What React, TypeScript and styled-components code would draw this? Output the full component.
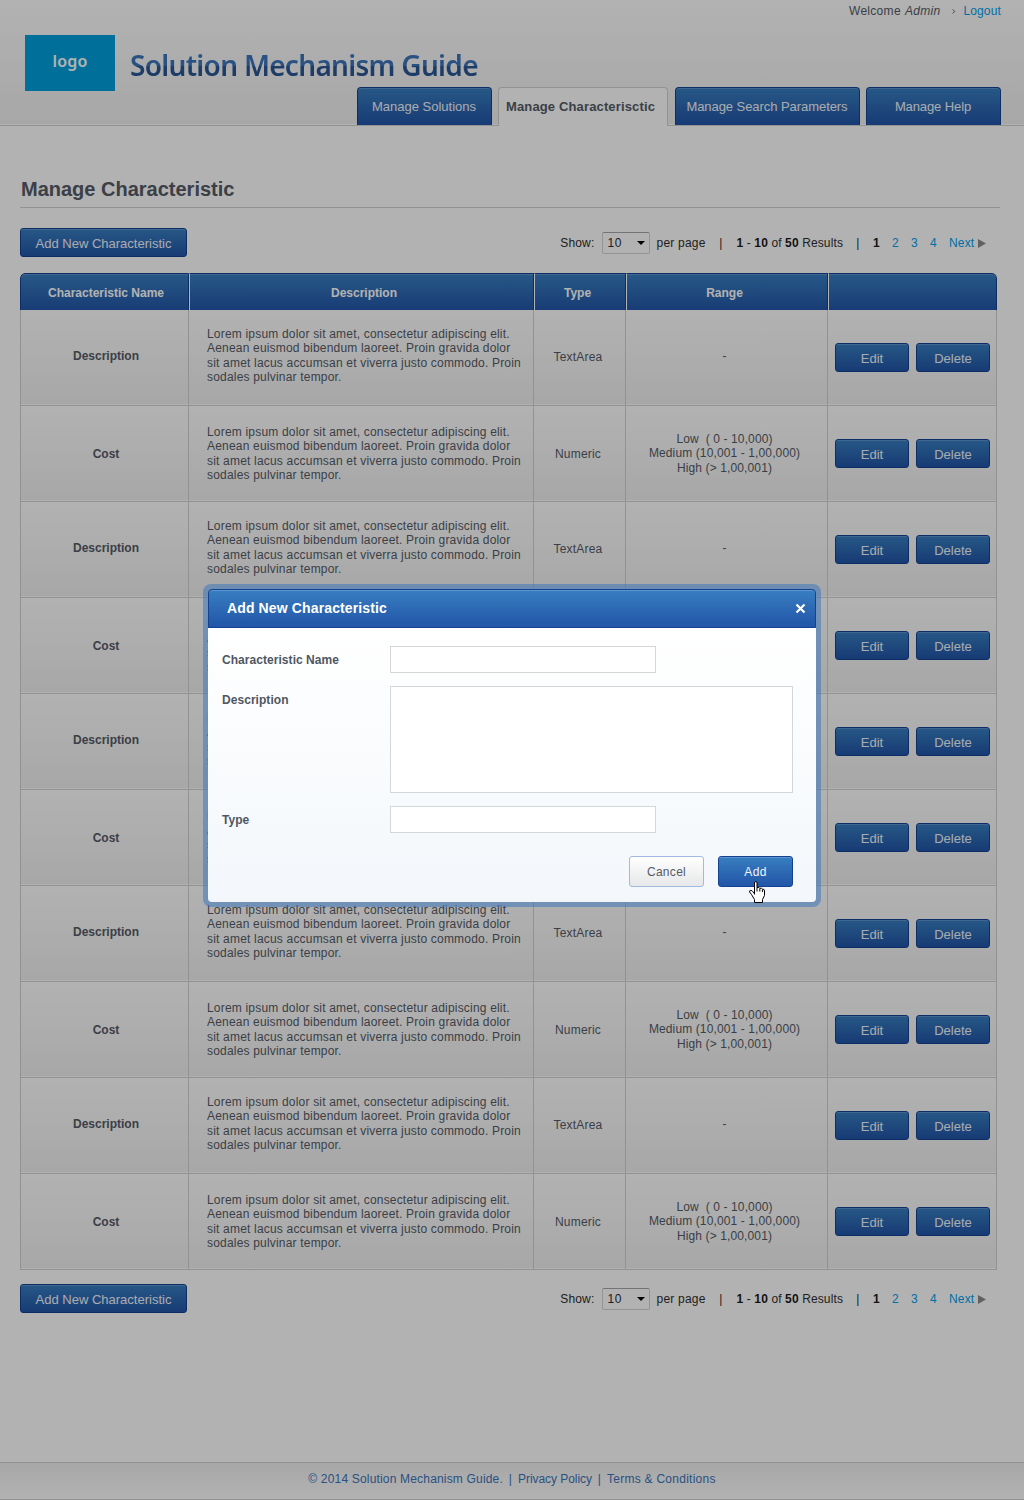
import React from "react";
import styled, { createGlobalStyle, css } from "styled-components";

const GlobalStyle = createGlobalStyle`
  *, *::before, *::after { box-sizing: border-box; }
  body {
    margin: 0;
    background: #fff;
    font-family: "Liberation Sans", Arial, sans-serif;
    font-size: 12px;
    color: #555b66;
  }
  a { text-decoration: none; color: inherit; }
  h1, h2, p { margin: 0; }
`;

const blueFill = css`
  background: linear-gradient(#387ec0, #2255a8);
  border: 1px solid #134291;
  box-shadow: inset 0 1px 0 #5b94cf;
`;

const Page = styled.div`
  position: relative;
  display: flex;
  flex-direction: column;
  width: 1024px;
  height: 1500px;
  overflow: hidden;
`;

const Header = styled.header`
  display: flex;
  justify-content: space-between;
  height: 126px;
  padding: 0 23px 0 25px;
  border-bottom: 1px solid #d2d2d2;
  background: linear-gradient(#fff, #f0f0f0);
  box-shadow: inset 0 -1px 0 #fff;
`;

const Brand = styled.div`
  display: flex;
  height: 56px;
  margin-top: 35px;
`;

const Logo = styled.div`
  width: 90px;
  height: 56px;
  background: #009fdb;
  color: #fff;
  font: 600 16px/52px "Noto Sans", sans-serif;
  letter-spacing: 0.2px;
  text-align: center;
`;

const BrandName = styled.h1`
  margin: 10px 0 0 15px;
  height: 41px;
  font: 600 28px/41px "Noto Sans", sans-serif;
  letter-spacing: -0.7px;
  white-space: nowrap;
  background: linear-gradient(#3b74bb 0, #3b74bb 21px, #2a5794 21px, #2a5794 100%);
  background-clip: text;
  color: transparent;
`;

const HeaderSide = styled.div`
  display: flex;
  flex-direction: column;
  justify-content: space-between;
  align-items: flex-end;
  width: 644px;
  margin-left: -300px;
`;

const UserBar = styled.div`
  display: flex;
  align-items: center;
  height: 22px;
  line-height: 22px;
  letter-spacing: 0.3px;
  em { margin-left: 4px; }
  svg { margin: 0 7px 0 12px; }
`;

const Link = styled.a`
  color: #00a0ee;
  letter-spacing: 0.15px;
`;

const Tabs = styled.nav`
  display: flex;
  width: 644px;
  height: 38px;
`;

const Tab = styled.a<{ $w: number; $gap: number; $active?: boolean; $ls?: number }>`
  width: ${(p) => p.$w}px;
  margin-right: ${(p) => p.$gap}px;
  border-radius: 4px 4px 0 0;
  font-size: 13px;
  line-height: 37px;
  letter-spacing: ${(p) => p.$ls ?? 0}px;
  text-align: center;
  white-space: nowrap;
  ${(p) =>
    p.$active
      ? css`
          height: 39px;
          border: 1px solid #d2d2d2;
          border-bottom: 0;
          background: #fff;
          font-weight: bold;
          padding-right: 5px;
        `
      : css`
          height: 38px;
          padding-right: 1px;
          color: #f2f5fa;
          ${blueFill}
          border-bottom: 0;
        `}
`;

const Main = styled.main`
  flex: 1;
  padding: 51px 24px 0 20px;
`;

const Title = styled.h2`
  height: 31px;
  padding-left: 1px;
  border-bottom: 1px solid #d2d2d2;
  font-size: 20px;
  line-height: 24px;
`;

const Toolbar = styled.div`
  display: flex;
  justify-content: space-between;
  align-items: flex-start;
  height: 30px;
`;

const Button = styled.button<{ $w: number; $h?: number; $size?: number; $ls?: number }>`
  ${blueFill}
  width: ${(p) => p.$w}px;
  height: ${(p) => p.$h ?? 29}px;
  padding: ${(p) => (p.$h ? 0 : 1)}px 0 0;
  border-radius: 3px;
  color: #f2f5fa;
  font-family: inherit;
  font-size: ${(p) => p.$size ?? 13}px;
  letter-spacing: ${(p) => p.$ls ?? 0}px;
`;

const CancelButton = styled(Button)`
  border-color: #9fbce0;
  background: linear-gradient(#fff, #e6e7e8);
  box-shadow: none;
  color: #555b66;
`;

const Pager = styled.div`
  display: flex;
  align-items: center;
  height: 30px;
  padding-right: 14px;
  color: #2e2e2e;
  letter-spacing: 0.2px;
  white-space: nowrap;
  b { color: #1c1c1c; }
`;

const PageSize = styled.div`
  display: flex;
  align-items: center;
  justify-content: space-between;
  width: 48px;
  height: 22px;
  margin: 0 7px;
  padding: 0 4px 0 5px;
  border: 1px solid #d4d4d8;
  border-top-color: #a6a6a6;
  border-radius: 2px;
  letter-spacing: 0.6px;
`;

const Bar = styled.span<{ $w: number }>`
  width: ${(p) => p.$w}px;
  text-align: center;
`;

const Results = styled.span`
  letter-spacing: 0.12px;
`;

const PageLinks = styled.div`
  display: flex;
  align-items: center;
  b, a { width: 19px; }
  a:last-of-type { width: 29px; }
`;

const GridTable = styled.div`
  width: 977px;
`;

const HeadRow = styled.div`
  display: grid;
  grid-template-columns: 169px 345px 92px 202px 169px;
  height: 37px;
  border-radius: 5px 5px 0 0;
  overflow: hidden;
`;

const HeadCell = styled.div`
  ${blueFill}
  color: #fff;
  font-weight: bold;
  line-height: 38px;
  text-align: center;
  &:first-child { border-radius: 5px 0 0 0; padding-left: 3px; }
  &:last-child { border-radius: 0 5px 0 0; }
  & + & {
    border-left-color: #fff;
    padding-left: 5px;
  }
  &:nth-child(n + 3) { padding-left: 0; padding-right: 5px; }
`;

const Row = styled.div`
  display: grid;
  grid-template-columns: 168px 345px 92px 202px 169px;
  height: 96px;
  border-bottom: 1px solid #d2d2d2;
  border-left: 1px solid #d2d2d2;
  background: linear-gradient(#fff, #f0f0f0);
  box-shadow: inset 0 -1px 0 #fff;
`;

const Cell = styled.div<{ $shift?: number }>`
  display: flex;
  flex-direction: column;
  align-items: center;
  justify-content: center;
  border-right: 1px solid #d2d2d2;
  padding-top: ${(p) => Math.max(p.$shift ?? 0, 0)}px;
  padding-bottom: ${(p) => Math.max(-(p.$shift ?? 0), 0)}px;
  line-height: 14.5px;
  white-space: pre;
`;

const NameCell = styled(Cell)`
  font-weight: bold;
  padding-left: 3px;
`;

const TextCell = styled(Cell)`
  align-items: flex-start;
  padding-left: 18px;
  letter-spacing: 0.19px;
`;

const RangeCell = styled(Cell)`
  letter-spacing: 0.12px;
  padding-right: 4px;
`;

const TypeCell = styled(Cell)`
  padding-right: 3px;
  letter-spacing: 0.2px;
`;

const ActionCell = styled(Cell)`
  flex-direction: row;
  align-items: flex-start;
  justify-content: flex-start;
  gap: 7px;
  padding: 33px 0 0 7px;
`;

const Footer = styled.footer`
  height: 38px;
  border-top: 1px solid #d2d2d2;
  border-bottom: 1px solid #d2d2d2;
  background: linear-gradient(#f0f0f0, #fff);
  color: #3b74bb;
  line-height: 32px;
  letter-spacing: 0.17px;
  display: flex;
  justify-content: center;
  white-space: nowrap;
`;

const FooterText = styled.a<{ $ls: number }>`
  letter-spacing: ${(p) => p.$ls}px;
`;

const FooterBar = styled.span`
  width: 15px;
  text-align: center;
`;

const Shade = styled.div`
  position: absolute;
  inset: 0;
  background: rgba(0, 0, 0, 0.3);
`;

const Dialog = styled.section`
  position: absolute;
  left: 203px;
  top: 584px;
  width: 618px;
  height: 323px;
  padding: 5px;
  border-radius: 8px;
  background: rgba(59, 119, 189, 0.54);
`;

const DialogHead = styled.div`
  ${blueFill}
  display: flex;
  align-items: center;
  justify-content: space-between;
  height: 39px;
  padding: 0 9px 1px 18px;
  border-radius: 4px 4px 0 0;
  color: #fff;
  font-size: 14px;
  font-weight: bold;
  letter-spacing: 0.13px;
  svg { margin-top: 1px; }
`;

const DialogBody = styled.div`
  height: 274px;
  padding: 18px 23px 0 14px;
  border-radius: 0 0 4px 4px;
  background: linear-gradient(#fff, #f3f7fb);
`;

const Field = styled.label`
  display: flex;
  margin-bottom: 13px;
  color: #4e5763;
  font-weight: bold;
`;

const FieldName = styled.span`
  width: 168px;
  height: 27px;
  line-height: 29px;
  letter-spacing: 0.05px;
`;

const Input = styled.input`
  width: 266px;
  height: 27px;
  border: 1px solid #d4d6d8;
  background: #fff;
`;

const TextArea = styled.textarea`
  display: block;
  width: 403px;
  height: 107px;
  border: 1px solid #d4d6d8;
  background: #fff;
  resize: none;
`;

const DialogActions = styled.div`
  display: flex;
  justify-content: flex-end;
  gap: 14px;
  padding-top: 10px;
`;

const Pointer = styled.svg`
  position: absolute;
  left: 749px;
  top: 881px;
`;

const Spacer = styled.div<{ $h: number }>`
  height: ${(p) => p.$h}px;
`;

const lorem = [
  "Lorem ipsum dolor sit amet, consectetur adipiscing elit.",
  "Aenean euismod bibendum laoreet. Proin gravida dolor",
  "sit amet lacus accumsan et viverra justo commodo. Proin",
  "sodales pulvinar tempor.",
];
const costRange = ["Low  ( 0 - 10,000)", "Medium (10,001 - 1,00,000)", "High (> 1,00,001)"];

const rows = Array.from({ length: 10 }, (_, i) =>
  i % 2 === 0
    ? { name: "Description", type: "TextArea", range: ["-"], shift: -4, nameShift: -2, typeShift: -1 }
    : { name: "Cost", type: "Numeric", range: costRange, shift: 0, nameShift: 2, typeShift: 0 }
);

function Controls() {
  return (
    <Toolbar>
      <Button $w={167}>Add New Characteristic</Button>
      <Pager>
        Show:
        <PageSize>
          10
          <svg width="8" height="4" viewBox="0 0 8 4"><path d="M0 0h8L4 4z" fill="#000" /></svg>
        </PageSize>
        per page
        <Bar $w={31}>|</Bar>
        <Results><b>1</b> - <b>10</b> of <b>50</b> Results</Results>
        <Bar $w={30}>|</Bar>
        <PageLinks>
          <b>1</b>
          <Link>2</Link>
          <Link>3</Link>
          <Link>4</Link>
          <Link>Next</Link>
          <svg width="8" height="9" viewBox="0 0 8 9"><path d="M0 0l8 4.5L0 9z" fill="#8c8c8c" /></svg>
        </PageLinks>
      </Pager>
    </Toolbar>
  );
}

export default function App() {
  return (
    <Page>
      <GlobalStyle />
      <Header>
        <Brand>
          <Logo>logo</Logo>
          <BrandName>Solution Mechanism Guide</BrandName>
        </Brand>
        <HeaderSide>
          <UserBar>
            Welcome <em>Admin</em>
            <svg width="4" height="5" viewBox="0 0 4 5"><path d="M.7.5l2 2-2 2" fill="none" stroke="#555b66" /></svg>
            <Link>Logout</Link>
          </UserBar>
          <Tabs>
            <Tab $w={135} $gap={6}>Manage Solutions</Tab>
            <Tab $w={170} $gap={7} $active $ls={0.14}>Manage Characterisctic</Tab>
            <Tab $w={185} $gap={6} $ls={-0.06}>Manage Search Parameters</Tab>
            <Tab $w={135} $gap={0} $ls={-0.1}>Manage Help</Tab>
          </Tabs>
        </HeaderSide>
      </Header>

      <Main>
        <Title>Manage Characteristic</Title>
        <Spacer $h={20} />
        <Controls />
        <Spacer $h={15} />
        <GridTable>
          <HeadRow>
            <HeadCell>Characteristic Name</HeadCell>
            <HeadCell>Description</HeadCell>
            <HeadCell>Type</HeadCell>
            <HeadCell>Range</HeadCell>
            <HeadCell />
          </HeadRow>
          {rows.map((r, i) => (
            <Row key={i}>
              <NameCell $shift={r.nameShift}>{r.name}</NameCell>
              <TextCell $shift={r.shift}>
                {lorem.map((l) => <span key={l}>{l}</span>)}
              </TextCell>
              <TypeCell $shift={r.name === "Cost" ? 2 : r.typeShift}>{r.type}</TypeCell>
              <RangeCell $shift={r.name === "Cost" ? 0 : -2}>
                {r.range.map((l) => <span key={l}>{l}</span>)}
              </RangeCell>
              <ActionCell>
                <Button $w={74}>Edit</Button>
                <Button $w={74}>Delete</Button>
              </ActionCell>
            </Row>
          ))}
        </GridTable>
        <Spacer $h={14} />
        <Controls />
      </Main>

      <Footer>
        <FooterText $ls={0.18}>© 2014 Solution Mechanism Guide.</FooterText>
        <FooterBar>|</FooterBar>
        <FooterText $ls={-0.05}>Privacy Policy</FooterText>
        <FooterBar>|</FooterBar>
        <FooterText $ls={0.26}>Terms &amp; Conditions</FooterText>
      </Footer>

      <Shade />

      <Dialog>
        <DialogHead>
          Add New Characteristic
          <svg width="11" height="11" viewBox="0 0 11 11"><path d="M1.500 1.500l8 8M9.500 1.500l-8 8" stroke="#fff" strokeWidth="2.2" /></svg>
        </DialogHead>
        <DialogBody>
          <Field><FieldName>Characteristic Name</FieldName><Input /></Field>
          <Field><FieldName>Description</FieldName><TextArea /></Field>
          <Field><FieldName>Type</FieldName><Input /></Field>
          <DialogActions>
            <CancelButton $w={75} $h={31} $size={12} $ls={0.3}>Cancel</CancelButton>
            <Button $w={75} $h={31} $size={12} $ls={0.3}>Add</Button>
          </DialogActions>
        </DialogBody>
      </Dialog>

      <Pointer width="17" height="22" viewBox="0 0 17 22">
        <path
          d="M5.500 13.500V2q0-1.500 1.300-1.500T8 2v4.500q2.500-.6 2.800.8 2-.6 2.600.8 2.100-.3 2.100 1.900v4.500l-2 4v3h-8v-3l-3-5L.6 11q-.4-1.500 1.200-1.600 1.500.2 2.200 1.400l1.500 2"
          fill="#fff"
          stroke="#000"
        />
        <path d="M8 6.500v4M10.800 7.500v3M13.400 8.500v2.500" stroke="#000" fill="none" />
      </Pointer>
    </Page>
  );
}
